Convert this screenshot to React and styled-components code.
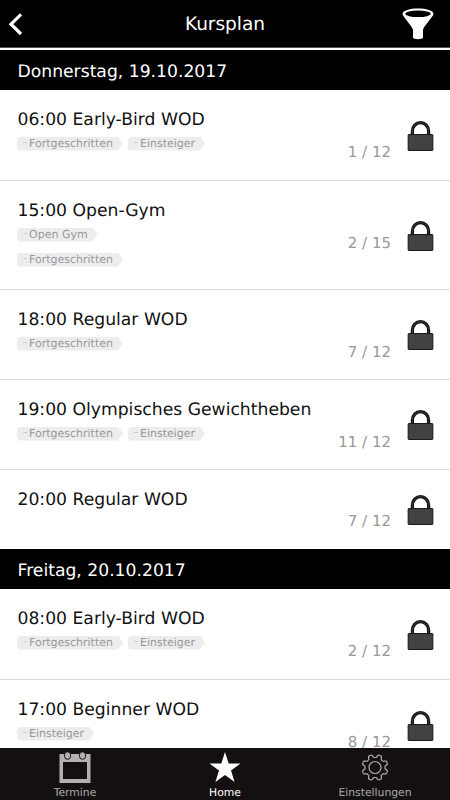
import React from "react";
import styled, { createGlobalStyle } from "styled-components";

const GlobalStyle = createGlobalStyle`
  * {
    box-sizing: border-box;
  }
  body {
    margin: 0;
    background: #fff;
    font-family: "DejaVu Sans", sans-serif;
    text-rendering: geometricPrecision;
  }
`;

const Screen = styled.div`
  display: flex;
  flex-direction: column;
  width: 450px;
  height: 800px;
  overflow: hidden;
  background: #fff;
`;

const TopBar = styled.header`
  display: grid;
  grid-template-columns: 60px 1fr 60px;
  align-items: center;
  flex: none;
  height: 50px;
  background: #000;
  border-bottom: 2px solid #fff;
  box-shadow: inset 0 -1px #555;
  color: #fff;
`;

const Title = styled.h1`
  margin: 0;
  padding-top: 1px;
  font-size: 18.5px;
  font-weight: 400;
  line-height: 47px;
  text-align: center;
`;

const IconButton = styled.button`
  display: flex;
  justify-content: ${props => (props.$right ? "flex-end" : "flex-start")};
  padding: ${props => (props.$right ? "0 16px 0 0" : "0 0 0 8px")};
  border: 0;
  background: none;
  color: inherit;
`;

const List = styled.main`
  flex: 1;
  min-height: 0;
  overflow: hidden;
`;

const DayHeader = styled.h2`
  height: 40px;
  margin: 0;
  padding: 1px 0 0 17.5px;
  background: #000;
  color: #fff;
  font-size: 17.2px;
  font-weight: 400;
  line-height: 42px;
`;

const Row = styled.div`
  display: flex;
  height: ${props => props.$height}px;
  padding: 18px 16px 0 17px;
  border-bottom: ${props => (props.$last ? 0 : "1px solid #dcdcdc")};
`;

const Info = styled.div`
  flex: 1;
`;

const CourseName = styled.div`
  height: 28.5px;
  padding-left: 0.5px;
  color: #111;
  font-size: 17.2px;
  line-height: 24px;
  white-space: nowrap;
`;

const Tags = styled.div`
  display: flex;
  flex-direction: ${props => (props.$stacked ? "column" : "row")};
  align-items: flex-start;
  gap: ${props => (props.$stacked ? "11px" : "5px")};
`;

const Tag = styled.span`
  height: 14px;
  padding: 0 10px 0 12px;
  background: #ededed;
  border-radius: 4px 0 0 4px;
  clip-path: polygon(0 0, calc(100% - 5px) 0, 100% 50%, calc(100% - 5px) 100%, 0 100%);
  color: #999;
  font-size: 11px;
  line-height: 14px;
  white-space: nowrap;

  &::before {
    content: "";
    display: inline-block;
    width: 4px;
    height: 1px;
    margin: 0 2px 4px -6px;
    background: #ccc;
  }
`;

const Count = styled.div`
  flex: none;
  height: 20px;
  margin-top: ${props => (props.$low ? 34 : 23)}px;
  color: #999;
  font-size: 15px;
  line-height: 20px;
`;

const LockWrap = styled.div`
  display: flex;
  align-items: center;
  width: 43px;
  margin-top: -17px;
  padding-left: 16px;
`;

const TabBar = styled.nav`
  display: grid;
  grid-template-columns: repeat(3, 1fr);
  flex: none;
  height: 52px;
  background: #141011;
`;

const Tab = styled.div`
  display: flex;
  flex-direction: column;
  align-items: center;
  padding-top: 3px;
  color: ${props => (props.$active ? "#fff" : "#aaa")};
  font-size: 10.8px;
  line-height: 14px;

  svg {
    display: block;
    margin-bottom: 2px;
  }
`;

const BackIcon = () => (
  <svg width="16" height="24" viewBox="0 0 16 24">
    <path d="M13 2.3 3 12.200l10 9.800" fill="none" stroke="currentColor" strokeWidth="3.200" />
  </svg>
);

const FunnelIcon = () => (
  <svg width="32" height="32" viewBox="0 0 32 32">
    <path
      d="M.5 6C.5 2.5 8 .6 16 .6S31.500 2.500 31.500 6c0 2.200-10.500 13-10.500 16v7.500c0 2.200-10 2.200-10 0V22C11 19 .5 8.200.5 6Z"
      fill="currentColor"
    />
    <ellipse cx="16" cy="5.800" rx="12.700" ry="3.300" fill="#000" />
  </svg>
);

const LockIcon = () => (
  <svg width="28" height="32" viewBox="0 0 28 32">
    <path
      d="M5.600 14.500V11a8.400 8.900 0 0 1 16.800 0v3.500"
      fill="none"
      stroke="#111"
      strokeWidth="3.400"
    />
    <path
      d="M5.600 14.500V11a8.400 8.900 0 0 1 16.800 0v3.500"
      fill="none"
      stroke="#3a3a3a"
      strokeWidth="1"
    />
    <rect x="1.200" y="14.500" width="25.600" height="16.500" rx=".6" fill="#424242" stroke="#111" />
  </svg>
);

const CalendarIcon = () => (
  <svg width="32" height="33" viewBox="0 0 32 33">
    <path d="M.5 3h31v29H.5zM4 11v17h24V11z" fill="#b3b0b1" fillRule="evenodd" />
    <rect x="5.500" y=".8" width="6" height="7.500" rx="3" fill="#b3b0b1" stroke="#141011" />
    <rect x="20.500" y=".8" width="6" height="7.500" rx="3" fill="#b3b0b1" stroke="#141011" />
  </svg>
);

const StarIcon = () => (
  <svg width="32" height="33" viewBox="0 0 32 33">
    <path d="m16 1 3.700 11.500H31.500L22 19.500 25.600 31 16 24 6.400 31 10 19.500.5 12.500h11.800z" fill="#fff" />
  </svg>
);

// eight shallow teeth around the hub
const gearPath = () => {
  const points = [];
  for (let i = 0; i <= 96; i++) {
    const a = (i / 96) * Math.PI * 2;
    const r = 11.5 + 1.5 * Math.tanh(3 * Math.cos(8 * (a - Math.PI / 8)));
    points.push(`${(16 + r * Math.cos(a)).toFixed(2)} ${(16.5 + r * Math.sin(a)).toFixed(2)}`);
  }
  return `M${points.join("L")}Z`;
};

const GearIcon = () => (
  <svg width="32" height="33" viewBox="0 0 32 33" fill="none" stroke="#aaa" strokeWidth="1.2">
    <path d={gearPath()} />
    <circle cx="16" cy="16.500" r="6" />
  </svg>
);

const days = [
  {
    date: "Donnerstag, 19.10.2017",
    courses: [
      { name: "06:00 Early-Bird WOD", tags: ["Fortgeschritten", "Einsteiger"], count: "1 / 12", height: 91 },
      { name: "15:00 Open-Gym", tags: ["Open Gym", "Fortgeschritten"], stacked: true, count: "2 / 15", height: 109 },
      { name: "18:00 Regular WOD", tags: ["Fortgeschritten"], count: "7 / 12", height: 90 },
      { name: "19:00 Olympisches Gewichtheben", tags: ["Fortgeschritten", "Einsteiger"], count: "11 / 12", height: 90 },
      { name: "20:00 Regular WOD", tags: [], count: "7 / 12", height: 79 }
    ]
  },
  {
    date: "Freitag, 20.10.2017",
    courses: [
      { name: "08:00 Early-Bird WOD", tags: ["Fortgeschritten", "Einsteiger"], count: "2 / 12", height: 91 },
      { name: "17:00 Beginner WOD", tags: ["Einsteiger"], count: "8 / 12", height: 90 }
    ]
  }
];

const Course = ({ course, last }) => (
  <Row $height={course.height} $last={last}>
    <Info>
      <CourseName>{course.name}</CourseName>
      <Tags $stacked={course.stacked}>
        {course.tags.map(tag => (
          <Tag key={tag}>{tag}</Tag>
        ))}
      </Tags>
    </Info>
    <Count $low={course.tags.length > 0}>{course.count}</Count>
    <LockWrap>
      <LockIcon />
    </LockWrap>
  </Row>
);

const App = () => (
  <Screen>
    <GlobalStyle />
    <TopBar>
      <IconButton aria-label="Zurück">
        <BackIcon />
      </IconButton>
      <Title>Kursplan</Title>
      <IconButton $right aria-label="Filter">
        <FunnelIcon />
      </IconButton>
    </TopBar>
    <List>
      {days.map(day => (
        <section key={day.date}>
          <DayHeader>{day.date}</DayHeader>
          {day.courses.map((course, i) => (
            <Course key={course.name} course={course} last={i === day.courses.length - 1} />
          ))}
        </section>
      ))}
    </List>
    <TabBar>
      <Tab>
        <CalendarIcon />
        Termine
      </Tab>
      <Tab $active>
        <StarIcon />
        Home
      </Tab>
      <Tab>
        <GearIcon />
        Einstellungen
      </Tab>
    </TabBar>
  </Screen>
);

export default App;
